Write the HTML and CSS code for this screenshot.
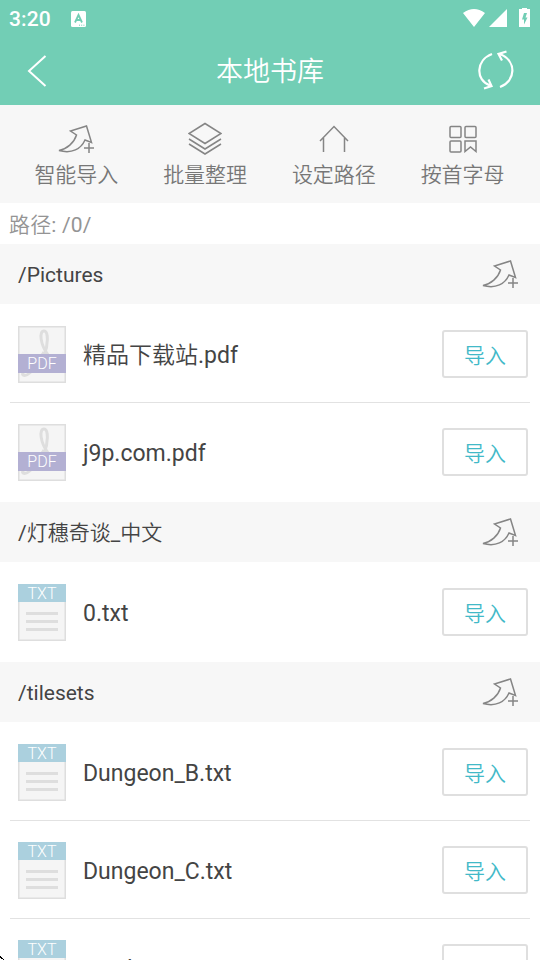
FILE: index.html
```html
<!DOCTYPE html>
<html lang="zh-CN">
<head>
<meta charset="utf-8">
<title>本地书库</title>
<link rel="stylesheet" href="styles.css">
</head>
<body>
<svg class="defs" aria-hidden="true">
  <symbol id="import" viewBox="0 0 38 30"><path d="M1 26.500C9 25 16 19 18.500 11L12.500 7L28.500 2L33.500 18.500L27 16C23 25 14 30 1 26.500Z"/><path d="M31 19V29M26 24H36"/></symbol>
</svg>
<header>
  <div class="status">
    <span class="time">3:20</span>
    <svg class="ime" width="15" height="16" viewBox="0 0 15 16"><rect width="15" height="16" rx="1.500" fill="#fff"/><path d="M4 11.500L7.500 4L11 11.500M5.200 9H9.800" fill="none" stroke="#72ceb5" stroke-width="1.800"/><path d="M8 14.200H9M10.200 14.200H11.200M12.400 14.200H13.400" stroke="#72ceb5"/></svg>
    <svg class="signals" width="70" height="20" viewBox="0 0 70 20" fill="#fff"><path d="M0 4Q11-4 22 4L11 18ZM26 18H44V0ZM59 0V-1H64V0H67V18H56V0Z"/><path d="M61 4L59 10.500H61V15.500L64.500 8.500H62.500L64 4Z" fill="#72ceb5"/></svg>
  </div>
  <div class="title">
    <svg width="20" height="32" viewBox="0 0 20 32" fill="none" stroke="#fff" stroke-width="2"><path d="M18.500 1L2 16L18.500 31"/></svg>
    <h1>本地书库</h1>
    <svg class="refresh" width="36" height="40" viewBox="0 0 36 40" fill="none" stroke="#fff" stroke-width="2.200"><path d="M14 4C-2 10-3 30 12 35.500M6 38.500L13.500 36L10.500 29.500M22 37C38 31 39 11 22 4M28.500 1.500L20.500 4L24 10.500"/></svg>
  </div>
</header>
<nav>
  <div><svg class="nudge" width="38" height="30"><use href="#import"/></svg><span>智能导入</span></div>
  <div><svg width="34" height="34" viewBox="0 0 34 34"><path d="M17 1.500L33 11.500L17 21.500L1 11.500ZM1 17L17 27L33 17M1 22L17 32L33 22"/></svg><span>批量整理</span></div>
  <div><svg width="30" height="28" viewBox="0 0 30 28"><path d="M1 16L15 1.500L29 16M4.500 13V27M25.500 13V27"/></svg><span>设定路径</span></div>
  <div><svg width="28" height="28" viewBox="0 0 28 28"><rect x="1" y="1.500" width="11" height="11" rx="1"/><rect x="16" y="1.500" width="11" height="11" rx="1"/><rect x="1" y="16" width="11" height="11" rx="1"/><path d="M16 26.500V16H27V26.500L21.500 22Z"/></svg><span>按首字母</span></div>
</nav>
<p class="path"><span class="cjk">路径</span>: /0/</p>
<main>
  <section>
    <h2><span>/Pictures</span><svg width="38" height="30"><use href="#import"/></svg></h2>
    <article><div class="file pdf"><svg width="48" height="57" viewBox="0 0 48 57"><path d="M26 30C30 20 31 5 26 5C21 5 22 18 30 29M26 26L19 37C15 45 9 51 5 49C3 47 8 44 13 42"/></svg><b>PDF</b></div><span class="name"><span class="cjk">精品下载站</span>.pdf</span><button>导入</button></article>
    <article><div class="file pdf"><svg width="48" height="57" viewBox="0 0 48 57"><path d="M26 30C30 20 31 5 26 5C21 5 22 18 30 29M26 26L19 37C15 45 9 51 5 49C3 47 8 44 13 42"/></svg><b>PDF</b></div><span class="name">j9p.com.pdf</span><button>导入</button></article>
  </section>
  <section>
    <h2><span>/<span class="cjk">灯穗奇谈</span>_<span class="cjk">中文</span></span><svg width="38" height="30"><use href="#import"/></svg></h2>
    <article><div class="file txt"><b>TXT</b><i></i><i></i><i></i></div><span class="name">0.txt</span><button>导入</button></article>
  </section>
  <section>
    <h2><span>/tilesets</span><svg width="38" height="30"><use href="#import"/></svg></h2>
    <article><div class="file txt"><b>TXT</b><i></i><i></i><i></i></div><span class="name">Dungeon_B.txt</span><button>导入</button></article>
    <article><div class="file txt"><b>TXT</b><i></i><i></i><i></i></div><span class="name">Dungeon_C.txt</span><button>导入</button></article>
    <article><div class="file txt"><b>TXT</b><i></i><i></i><i></i></div><span class="name">Inside_B.txt</span><button>导入</button></article>
  </section>
</main>
<svg class="pointer" width="4" height="4" viewBox="0 0 4 4"><path d="M0 0H1V1H2V2H3V3H4V4H3V3H1V2H0Z"/></svg>
</body>
</html>
```
FILE: styles.css
```css
* { box-sizing: border-box; }
body { margin: 0; height: 960px; overflow: hidden; position: relative; background: #fff; color: #444; font-family: Roboto, "Noto Sans CJK SC", sans-serif; }
.defs { position: absolute; width: 0; height: 0; }
.pointer { position: absolute; left: 0; bottom: 0; }
.cjk { font-weight: 350; }
svg { display: block; flex: none; }
header { height: 105px; background: #72ceb5; color: #fff; }
.status { height: 36px; display: flex; align-items: center; padding: 1px 7px 0 9px; }
.time { width: 62px; font-size: 21px; font-weight: 500; letter-spacing: .1px; }
.signals { margin-left: auto; overflow: visible; }
.title { height: 69px; display: flex; align-items: center; justify-content: space-between; padding: 0 26px 0 27px; }
h1 { margin: 2px 0 0 15px; font-size: 27px; font-weight: 350; line-height: 40px; }
.refresh { margin-bottom: 2px; }
nav { height: 98px; padding: 0 13px 0 12px; display: grid; grid-template-columns: repeat(4, 1fr); background: #f7f7f7; color: #777; font-size: 21px; font-weight: 350; }
nav div { display: grid; grid-template-rows: 36px 33px; justify-items: center; align-items: center; align-content: start; padding-top: 16px; line-height: 32px; }
nav span { padding-top: 2px; }
nav svg, h2 svg { fill: none; stroke: #858585; stroke-width: 1.5; }
nav .nudge { margin-left: 2px; }
.path { height: 41px; margin: 0; padding: 2px 9px 0; font-size: 21px; line-height: 40px; color: #949494; letter-spacing: .15px; }
h2 { height: 60px; margin: 0; padding: 0 20px 0 18px; display: flex; align-items: center; justify-content: space-between; background: #f7f7f7; font-size: 21px; font-weight: 400; line-height: 60px; }
h2 > span { height: 60px; padding-top: 1px; }
article { height: 98px; margin: 0 10px; padding: 21px 2px 0 8px; display: flex; align-items: flex-start; border-bottom: 1px solid #e2e2e2; }
article:first-of-type { height: 99px; padding-top: 22px; }
article:last-child { height: 99px; border-bottom: 0; }
article:first-of-type:last-child { height: 100px; }
.name { margin-left: 17px; height: 57px; font-size: 23px; line-height: 60px; }
.file { width: 48px; height: 57px; flex: none; position: relative; background: #f5f5f5; box-shadow: inset 0 0 0 1.5px #dedede; }
.file b { display: block; height: 18px; color: #fff; font: 300 16px/19px Roboto, sans-serif; text-align: center; position: relative; }
.pdf { padding-top: 28px; }
.pdf svg { position: absolute; inset: 0; }
.pdf path { fill: none; stroke: #dedede; stroke-width: 3; }
.file.pdf b { height: 19px; background: #b3b0d3; line-height: 20px; }
.txt b { background: #abd0de; margin-bottom: 10px; }
.txt i { display: block; height: 3px; margin: 0 8px 5px; background: #dedede; }
button { width: 86px; height: 48px; margin: 4px 0 0 auto; padding: 0; border: 2px solid #dfdfdf; border-radius: 3px; background: #fff; color: #42b9c8; font: 350 21px Roboto, "Noto Sans CJK SC", sans-serif; }
```
